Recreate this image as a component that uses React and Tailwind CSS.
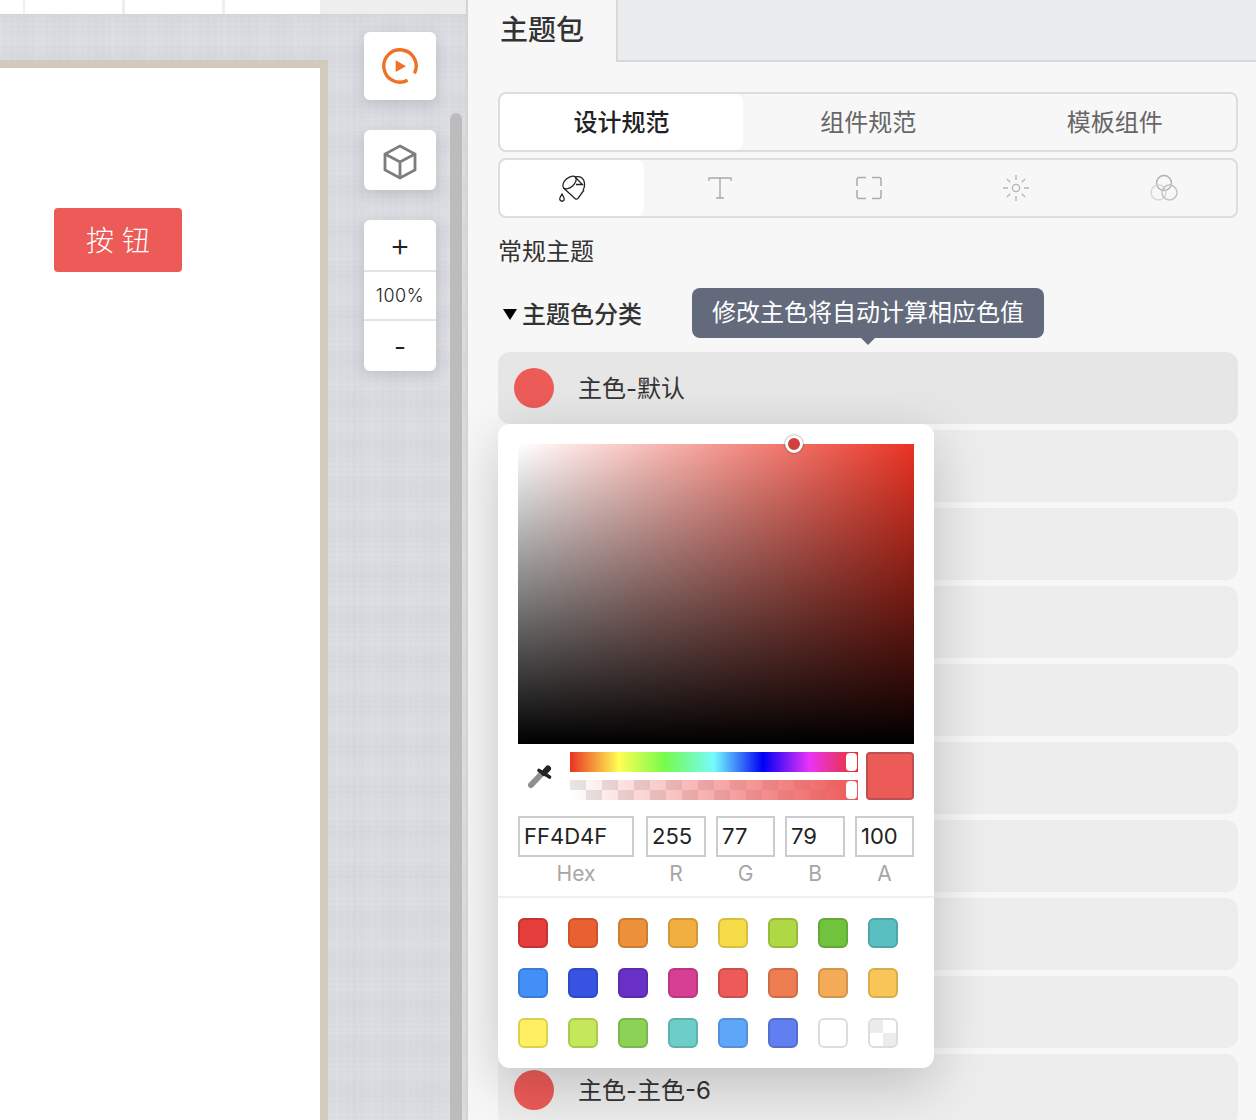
const FONT = "font-['Inter','Noto_Sans_CJK_SC',sans-serif]";

const swatches = [
  ["#e43d3b", "#c53432"], ["#e96130", "#cb5429"], ["#ec9039", "#cd7d31"], ["#f0af40", "#d09837"],
  ["#f7dc4a", "#d7bf40"], ["#aed945", "#97bc3c"], ["#71c33d", "#62a935"], ["#59bfc0", "#4da6a7"],
  ["#428ff8", "#397cd7"], ["#3653e2", "#2f48c4"], ["#6930c7", "#5b2aad"], ["#d63f93", "#ba3780"],
  ["#ed5a58", "#ce4e4c"], ["#ef7d52", "#cf6c47"], ["#f4ab58", "#d4944c"], ["#f8c658", "#d7ac4c"],
  ["#fef060", "#dcd053"], ["#c5e85b", "#abc94f"], ["#8cd257", "#79b64b"], ["#6dcdc9", "#5eb2ae"],
  ["#5fa6f9", "#5290d8"], ["#617ff0", "#546ed0"], ["#ffffff", "#dddddd"],
];

const rows = [
  { label: "主色-默认", active: true },
  {}, {}, {}, {}, {}, {}, {}, {},
  { label: "主色-主色-6" },
];

const fields = [
  { label: "Hex", value: "FF4D4F", width: "w-[116px] mr-[2px]" },
  { label: "R", value: "255", width: "w-[60px]" },
  { label: "G", value: "77", width: "w-[59px]" },
  { label: "B", value: "79", width: "w-[60px]" },
  { label: "A", value: "100", width: "w-[59px]" },
];

const PlayIcon = () => (
  <svg width="38" height="38" viewBox="0 0 38 38" fill="none">
    <path d="M33.4 26.4 A16.2 16.2 0 1 0 26.6 33.3" stroke="#ee7128" strokeWidth="3.4" />
    <path d="M14.7 13.3 L25 19.3 L14.7 25 Z" fill="#ee7128" />
  </svg>
);

const CubeIcon = () => (
  <svg width="34" height="36" viewBox="0 0 34 36" fill="none" stroke="#7d7d7d" strokeWidth="2.8">
    <path d="M17 2 L32 10 V26 L17 34 L2 26 V10 Z" />
    <path d="M2 10 L17 18 L32 10 M17 18 V34" />
  </svg>
);

const BucketIcon = () => (
  <svg width="30" height="30" viewBox="0 0 30 30" fill="none" stroke="#222" strokeWidth="1.3">
    <ellipse cx="11.5" cy="8.5" rx="8" ry="4.6" transform="rotate(-42 11.5 8.5)" />
    <path d="M5.5 14 L17.5 25 Q19 25.6 20 24.4 L26 16" />
    <path d="M17 3 Q24 1.5 26 7 Q27.5 12 25 16" />
    <path d="M17 3 L24.5 10.5 H18" />
    <path d="M4 20 Q1 24.5 2 26 Q4 28.5 6 26 Q6.8 24.5 4 20 Z" />
  </svg>
);

const TextIcon = () => (
  <svg width="26" height="24" viewBox="0 0 26 24" fill="none" stroke="#aaaaaa" strokeWidth="1.4">
    <path d="M2 5 V2 H24 V5 M13 2 V22 M9 22 H17" />
  </svg>
);

const FrameIcon = () => (
  <svg width="26" height="24" viewBox="0 0 26 24" fill="none" stroke="#aaaaaa" strokeWidth="1.5">
    <path d="M10 1.5 H3 Q1 1.5 1 3.5 V10 M16 1.5 H23 Q25 1.5 25 3.5 V10 M1 14 V20.5 Q1 22.5 3 22.5 H10 M25 14 V20.5 Q25 22.5 23 22.5 H16" />
  </svg>
);

const SunIcon = () => (
  <svg width="28" height="28" viewBox="0 0 28 28" fill="none" stroke="#b4b4b4" strokeWidth="1.3">
    <circle cx="14" cy="14" r="3.6" />
    <path d="M14 1 V6 M14 22 V27 M1 14 H6 M22 14 H27 M5 5 L8.2 8.2 M23 5 L19.8 8.2 M5 23 L8.2 19.8 M23 23 L19.8 19.8" />
  </svg>
);

const CirclesIcon = () => (
  <svg width="30" height="28" viewBox="0 0 30 28" fill="none" strokeWidth="1.4">
    <circle cx="15" cy="9" r="7.5" stroke="#b0b0b0" />
    <circle cx="9.5" cy="18.5" r="7.5" stroke="#d6d6d6" />
    <circle cx="20.5" cy="18.5" r="7.5" stroke="#c0c0c0" />
  </svg>
);

const EyeDropper = () => (
  <svg width="26" height="26" viewBox="0 0 26 26" fill="none" strokeLinecap="round">
    <path d="M4 21 L14.5 10" stroke="#8f8f8f" strokeWidth="6" />
    <path d="M12 6.5 L22.5 13" stroke="#222" strokeWidth="3.6" />
    <path d="M17 9 L21 4.5" stroke="#222" strokeWidth="6" />
  </svg>
);

const ToolCard = ({ className, children }) => (
  <div className={`flex w-[72px] items-center justify-center rounded-md bg-white shadow-[0_4px_14px_rgba(60,60,90,0.16)] ${className}`}>
    {children}
  </div>
);

const Canvas = () => (
  <div className="flex h-full w-[468px] flex-col border-r-2 border-[#d4d4d4]">
    <div className="flex h-[15px] shrink-0 border-b border-[#d4d4d4] bg-[#eeeeee]">
      <div className="w-[23px] bg-white" />
      <div className="ml-[2px] w-[97px] bg-white" />
      <div className="ml-[3px] w-[97px] bg-white" />
      <div className="ml-[3px] w-[95px] bg-white" />
    </div>
    <div className="flex min-h-0 flex-1 overflow-hidden bg-[#dbdce1] bg-[repeating-linear-gradient(90deg,rgba(255,255,255,0.05)_0,transparent_3px,rgba(130,130,145,0.02)_5px,transparent_7px),repeating-linear-gradient(0deg,rgba(255,255,255,0.04)_0,transparent_2px,rgba(130,130,145,0.02)_4px,transparent_5px),repeating-linear-gradient(90deg,rgba(255,255,255,0.04)_0,transparent_11px,rgba(120,120,135,0.02)_23px,transparent_37px),repeating-linear-gradient(0deg,rgba(255,255,255,0.05)_0,transparent_13px,rgba(120,120,135,0.03)_29px,transparent_43px)]">
      <div className="mt-[45px] w-[328px] shrink-0 border-t-8 border-r-8 border-[#d1cabd] bg-white pt-[140px] pl-[54px]">
        <div className="flex h-16 w-32 items-center justify-center rounded bg-[#ec5b58] text-[28px] font-light text-white">
          <span className="translate-y-px">按 钮</span>
        </div>
      </div>
      <div className="mt-[17px] ml-9 flex w-[72px] shrink-0 flex-col">
        <ToolCard className="h-[68px]"><PlayIcon /></ToolCard>
        <ToolCard className="mt-[30px] h-[60px]"><div className="translate-y-[2px]"><CubeIcon /></div></ToolCard>
        <div className="mt-[30px] flex h-[151px] flex-col rounded-md bg-white text-[#222] shadow-[0_4px_14px_rgba(60,60,90,0.16)]">
          <div className="flex h-[50px] items-center justify-center text-[32px] font-light">+</div>
          <div className="flex h-[51px] items-center justify-center border-y-2 border-[#e4e4e4] text-[18px] font-light tracking-[0.6px]">100%</div>
          <div className="flex flex-1 items-center justify-center text-[26px]">-</div>
        </div>
      </div>
      <div className="mt-[98px] ml-[14px] h-full w-3 rounded-full bg-[#bcbcbc]" />
    </div>
  </div>
);

const ColorPicker = () => (
  <div className="absolute top-[72px] left-0 z-10 h-[644px] w-[436px] rounded-xl bg-white shadow-[0_16px_56px_rgba(0,0,0,0.2)]">
    <div className="relative mx-5 mt-5 h-[300px] w-[396px] bg-[linear-gradient(to_top,#000,transparent),linear-gradient(to_right,#fff,#ea3323)]">
      <div className="absolute -top-[9px] left-[267px] h-[18px] w-[18px] rounded-full border-[3px] border-white bg-[#d23f40] shadow-[0_0_2px_rgba(0,0,0,0.6)]" />
    </div>
    <div className="mx-5 mt-2 flex">
      <div className="flex w-[52px] items-center pl-[9px]">
        <div className="mt-[2px]"><EyeDropper /></div>
      </div>
      <div className="flex w-[288px] flex-col gap-2">
        <div className="relative h-5 bg-[linear-gradient(to_right,#ea3323,#fffe54_17%,#75fb4c_33%,#75fbfd_50%,#0000f5_67%,#ea33f7_83%,#ea3323)]">
          <div className="absolute top-[1px] right-[1px] h-[18px] w-[11px] rounded-sm bg-white" />
        </div>
        <div className="relative h-5 bg-[linear-gradient(to_right,rgba(237,90,88,0),#ed5a58),conic-gradient(#fff_25%,#e6e6e6_0_50%,#fff_0_75%,#e6e6e6_0)] bg-[size:100%_100%,32px_20px]">
          <div className="absolute top-[1px] right-[1px] h-[18px] w-[11px] rounded-sm bg-white" />
        </div>
      </div>
      <div className="ml-2 h-12 w-12 rounded border-2 border-[#bd504e] bg-[#ec5b58]" />
    </div>
    <div className="mx-5 mt-4 flex gap-[10px]">
      {fields.map((field) => (
        <div key={field.label} className={field.width}>
          <div className="flex h-[41px] items-center border-2 border-[#cccccc] pb-[2px] pl-1 text-[22px] leading-none text-[#222]">
            {field.value}
          </div>
          <div className="mt-[5px] text-center text-[21px] leading-6 text-[#a6a6a6]">{field.label}</div>
        </div>
      ))}
    </div>
    <div className="mt-[10px] h-[2px] bg-[#f0f0f0]" />
    <div className="mx-5 mt-5 grid grid-cols-[repeat(8,30px)] gap-x-5 gap-y-5">
      {swatches.map(([fill, edge]) => (
        <div
          key={fill}
          className="h-[30px] w-[30px] rounded-md border-2"
          style={{ backgroundColor: fill, borderColor: edge }}
        />
      ))}
      <div className="h-[30px] w-[30px] rounded-md border-2 border-[#dddddd] bg-[conic-gradient(#fff_25%,#ececec_0_50%,#fff_0_75%,#ececec_0)] bg-[size:26px_26px]" />
    </div>
  </div>
);

const ThemePanel = () => (
  <div className="flex h-full flex-1 flex-col overflow-hidden bg-[#f7f7f7]">
    <div className="flex h-[62px] shrink-0">
      <div className="flex w-[150px] items-start border-r-2 border-[#d8d8d8] pt-[10px] pl-[32px] text-[28px] leading-10 font-medium text-[#333]">
        主题包
      </div>
      <div className="flex-1 border-b-2 border-[#d8d8d8] bg-[#ebecee]" />
    </div>
    <div className="mt-[30px] mr-[18px] ml-[30px]">
      <div className="flex h-[60px] rounded-lg border-2 border-[#dddddd] text-[24px] text-[#666]">
        <div className="flex w-[243px] items-center justify-center rounded-lg bg-white pt-[2px] font-medium text-[#222]">设计规范</div>
        <div className="flex flex-1 pl-1">
          <div className="flex flex-1 items-center justify-center pt-[2px] pr-[2px]">组件规范</div>
          <div className="flex flex-1 items-center justify-center pt-[2px] pl-[2px]">模板组件</div>
        </div>
      </div>
      <div className="mt-[6px] flex h-[60px] rounded-lg border-2 border-[#dddddd]">
        <div className="flex w-[144px] items-center justify-center rounded-lg bg-white pt-[2px] pl-[2px]"><BucketIcon /></div>
        <div className="flex flex-1 pl-1">
          <div className="flex flex-1 items-center justify-center pr-[5px]"><TextIcon /></div>
          <div className="flex flex-1 items-center justify-center pr-[3px]"><FrameIcon /></div>
          <div className="flex flex-1 items-center justify-center"><SunIcon /></div>
          <div className="flex flex-1 items-center justify-center pl-1"><CirclesIcon /></div>
        </div>
      </div>
      <div className="mt-[18px] text-[24px] leading-8 text-[#333]">常规主题</div>
      <div className="relative mt-[20px] flex h-[50px] items-center">
        <div className="mt-[2px] ml-[5px] h-0 w-0 border-x-[7px] border-t-[11px] border-x-transparent border-t-black" />
        <div className="mt-1 ml-[5px] text-[24px] font-medium text-[#333]">主题色分类</div>
        <div className="absolute top-0 left-[194px] flex h-[50px] w-[352px] items-center justify-center rounded-lg bg-[#626a7c] text-[24px] text-white">
          修改主色将自动计算相应色值
          <div className="absolute top-full left-[169px] h-0 w-0 border-x-[7px] border-t-[7px] border-x-transparent border-t-[#626a7c]" />
        </div>
      </div>
      <div className="relative mt-[14px]">
        <div className="flex flex-col gap-[6px]">
          {rows.map((row, index) => (
            <div
              key={index}
              className={`flex h-[72px] shrink-0 items-center rounded-xl pl-4 ${row.active ? "bg-[#e6e6e6]" : "bg-[#ededed]"}`}
            >
              {row.label && (
                <>
                  <div className="h-10 w-10 rounded-full bg-[#ec5b58]" />
                  <div className="mt-[2px] ml-6 text-[24px] text-[#333]">{row.label}</div>
                </>
              )}
            </div>
          ))}
        </div>
        <ColorPicker />
      </div>
    </div>
  </div>
);

export default function App() {
  return (
    <div className={`flex h-[1120px] w-[1256px] overflow-hidden ${FONT}`}>
      <Canvas />
      <ThemePanel />
    </div>
  );
}
